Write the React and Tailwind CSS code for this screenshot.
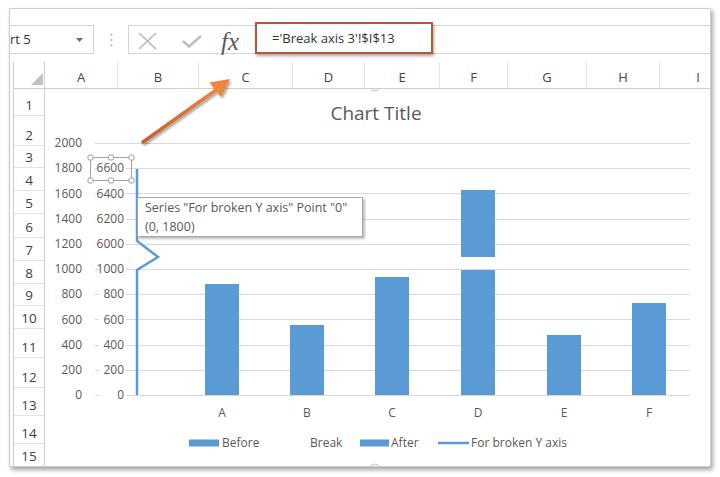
import React from "react";

const cols = [
  ["A", "w-[73px]"],
  ["B", "w-[81px]"],
  ["C", "w-[94px]"],
  ["D", "w-[72px]"],
  ["E", "w-[75px]"],
  ["F", "w-[68px]"],
  ["G", "w-[79px]"],
  ["H", "w-[73px]"],
  ["I", "w-[76px]"],
];

const rows = [
  "h-[27px]", "h-[30px]", "h-[22px]", "h-[23px]", "h-[23px]", "h-[24px]", "h-[23px]", "h-[23px]",
  "h-[22px]", "h-[23px]", "h-[29px]", "h-[30px]", "h-[28px]", "h-[28px]", "h-[22px]",
];

const leftLabels = ["2000", "1800", "1600", "1400", "1200", "1000", "800", "600", "400", "200", "0"];
const rightLabels = [null, "6600", "6400", "6200", "6000", "1000", "800", "600", "400", "200", "0"];

const BLUE = "#5b9bd5";
const bars = [
  { x: 205, top: 284, label: "A" },
  { x: 290, top: 325, label: "B" },
  { x: 375, top: 277, label: "C" },
  { x: 461, top: 270, label: "D" },
  { x: 547, top: 335, label: "E" },
  { x: 632, top: 303, label: "F" },
];

function Chart() {
  const gy = (i) => 143 + i * 25.2;
  return (
    <svg width="665" height="377" viewBox="45 89 665 377" className="block">
      <text x="376" y="113" textAnchor="middle" dy="0.35em" fontSize="19" fill="#595959">
        Chart Title
      </text>
      {leftLabels.map((l, i) => (
        <line key={"g" + i} x1="95" x2="690" y1={Math.round(gy(i)) + 0.5} y2={Math.round(gy(i)) + 0.5} stroke="#d9d9d9" strokeWidth="1" />
      ))}
      {leftLabels.map((l, i) => (
        <text key={"l" + i} x="82" y={gy(i)} dy="0.35em" textAnchor="end" fontSize="12" fill="#595959">
          {l}
        </text>
      ))}
      {rightLabels.map((l, i) =>
        l ? (
          <g key={"r" + i}>
            <rect x="99" y={gy(i) - 7} width="27" height="14" fill="#ffffff" />
            <text x="124" y={gy(i)} dy="0.35em" textAnchor="end" fontSize="12" fill="#595959">
              {l}
            </text>
          </g>
        ) : null
      )}
      {bars.map((b) => (
        <rect key={b.label} x={b.x} y={b.top} width="34" height={395 - b.top} fill={BLUE} />
      ))}
      <rect x="461" y="190" width="34" height="67" fill={BLUE} />
      {bars.map((b) => (
        <text key={"x" + b.label} x={b.x + 17} y="413" dy="0.35em" textAnchor="middle" fontSize="12" fill="#595959">
          {b.label}
        </text>
      ))}
      <polyline
        points="137,169 137,241 158,257 137,270 137,395"
        fill="none"
        stroke={BLUE}
        strokeWidth="2.5"
        strokeLinejoin="miter"
      />
      {/* selection box around 6600 */}
      <rect x="90.5" y="157.5" width="41" height="23" fill="none" stroke="#a3a3a3" strokeWidth="1" />
      {[[90.5, 157.5], [111, 157.5], [131.5, 157.5], [90.5, 180.5], [111, 180.5], [131.5, 180.5]].map(([x, y], i) => (
        <rect key={"h" + i} x={x - 2.5} y={y - 2.5} width="5" height="5" rx="1.5" fill="#ffffff" stroke="#9a9a9a" strokeWidth="1" />
      ))}
      {/* legend */}
      <rect x="189" y="439.5" width="30" height="7" fill={BLUE} />
      <text x="222" y="443" dy="0.35em" fontSize="12" fill="#595959">Before</text>
      <text x="310" y="443" dy="0.35em" fontSize="12" fill="#595959">Break</text>
      <rect x="360" y="439.5" width="29" height="7" fill={BLUE} />
      <text x="391" y="443" dy="0.35em" fontSize="12" fill="#595959">After</text>
      <line x1="438" x2="469" y1="443" y2="443" stroke={BLUE} strokeWidth="2.5" />
      <text x="471" y="443" dy="0.35em" fontSize="12" fill="#595959">For broken Y axis</text>
      {/* chart resize handles */}
      <circle cx="375" cy="468" r="4" fill="#ffffff" stroke="#c4c4c4" strokeWidth="1" />
      <circle cx="375" cy="87" r="4" fill="#ffffff" stroke="#c4c4c4" strokeWidth="1" />
    </svg>
  );
}

export default function App() {
  return (
    <div className="relative w-[720px] h-[477px] bg-white overflow-hidden font-['Open_Sans',sans-serif]">
      <div className="ml-[9px] mt-[8px] w-[702px] h-[459px] border border-[#cbcbcb] rounded-br-[3px] bg-white shadow-[2px_3px_4px_rgba(0,0,0,0.35)] flex flex-col overflow-hidden">
        {/* toolbar */}
        <div className="h-[53px] shrink-0 flex items-start pt-[16px]">
          <div className="w-[84px] h-[29px] border-y border-r border-[#d4d4d4] flex items-center justify-between pr-[10px]">
            <span className="text-[13px] text-[#333] leading-none">rt 5</span>
            <svg width="7" height="4" viewBox="0 0 7 4">
              <polygon points="0,0 7,0 3.5,4" fill="#6b6b6b" />
            </svg>
          </div>
          <div className="w-[34px] h-[29px] flex items-center justify-center">
            <svg width="3" height="14" viewBox="0 0 3 14">
              <circle cx="1.5" cy="1.5" r="1" fill="#b0b0b0" />
              <circle cx="1.5" cy="7" r="1" fill="#b0b0b0" />
              <circle cx="1.5" cy="12.5" r="1" fill="#b0b0b0" />
            </svg>
          </div>
          <div className="flex-1 h-[29px] border-y border-l border-[#d4d4d4] flex items-start">
            <div className="w-[126px] h-full flex items-center pt-[3px]">
              <svg width="19" height="18" viewBox="0 0 19 18" className="ml-[9px]">
                <path d="M1 1 L18 17 M18 1 L1 17" stroke="#b8b8b8" strokeWidth="1.6" fill="none" />
              </svg>
              <svg width="20" height="13" viewBox="0 0 20 13" className="ml-[25px]">
                <path d="M1 6 L7 11.5 L19 1" stroke="#bdbdbd" strokeWidth="2.6" fill="none" />
              </svg>
              <span className="ml-[19px] font-['Liberation_Serif',serif] italic text-[25px] leading-none text-[#5a5a5a]">
                fx
              </span>
            </div>
            <div className="w-[178px] h-[32px] -mt-[4px] border-2 border-[#b9553d] bg-white shadow-[1px_2px_3px_rgba(0,0,0,0.35)] flex items-center pl-[15px]">
              <span className="text-[13px] text-[#333] leading-none">='Break axis 3'!$I$13</span>
            </div>
          </div>
        </div>

        {/* sheet */}
        <div className="flex flex-col pl-[3px]">
          {/* column header */}
          <div className="h-[27px] flex border-b border-[#cfcfcf]">
            <div className="w-[32px] shrink-0 border-x border-[#cfcfcf] flex items-end justify-end pr-[1px] pb-[3px]">
              <svg width="12" height="12" viewBox="0 0 12 12">
                <polygon points="12,0 12,12 0,12" fill="#c2c2c2" />
              </svg>
            </div>
            {cols.map(([l, w], i) => (
              <div
                key={l}
                className={`${w} shrink-0 flex items-end justify-center pb-[3px] text-[13px] leading-[16px] text-[#444] ${i < cols.length - 1 ? "border-r border-[#e4e4e4]" : ""}`}
              >
                {l}
              </div>
            ))}
          </div>
          {/* body */}
          <div className="flex">
            <div className="w-[32px] shrink-0 border-x border-[#cfcfcf] flex flex-col">
              {rows.map((h, i) => (
                <div
                  key={i}
                  className={`${h} flex items-end justify-center pb-[2px] text-[13.5px] leading-[15px] text-[#3f3f3f] ${i < rows.length - 1 ? "border-b border-[#e4e4e4]" : ""}`}
                >
                  {i + 1}
                </div>
              ))}
            </div>
            <div className="relative w-[665px] h-[377px] bg-white">
              <Chart />
              <div className="absolute left-[92px] top-[108px] w-[226px] h-[40px] bg-white border border-[#a6a6a6] shadow-[2px_2px_2px_rgba(0,0,0,0.25)] pl-[7px] text-[12.5px] leading-[19px] text-[#595959]">
                <div>Series "For broken Y axis" Point "0"</div>
                <div>(0, 1800)</div>
              </div>
            </div>
          </div>
        </div>
      </div>

      {/* arrow overlay */}
      <svg className="absolute left-0 top-0 pointer-events-none" width="720" height="477" viewBox="0 0 720 477">
        <defs>
          <linearGradient id="ag" x1="143" y1="142" x2="229" y2="80" gradientUnits="userSpaceOnUse">
            <stop offset="0" stopColor="#c4622e" />
            <stop offset="1" stopColor="#f08a3e" />
          </linearGradient>
          <filter id="sh" x="-20%" y="-20%" width="140%" height="140%">
            <feDropShadow dx="1.5" dy="2" stdDeviation="1.2" floodColor="#000" floodOpacity="0.35" />
          </filter>
        </defs>
        <g filter="url(#sh)">
          <line x1="143" y1="142" x2="216" y2="90" stroke="url(#ag)" strokeWidth="3.5" strokeLinecap="round" />
          <polygon points="230,79 221,97 209.5,82.5" fill="#ee853c" />
        </g>
      </svg>
    </div>
  );
}
